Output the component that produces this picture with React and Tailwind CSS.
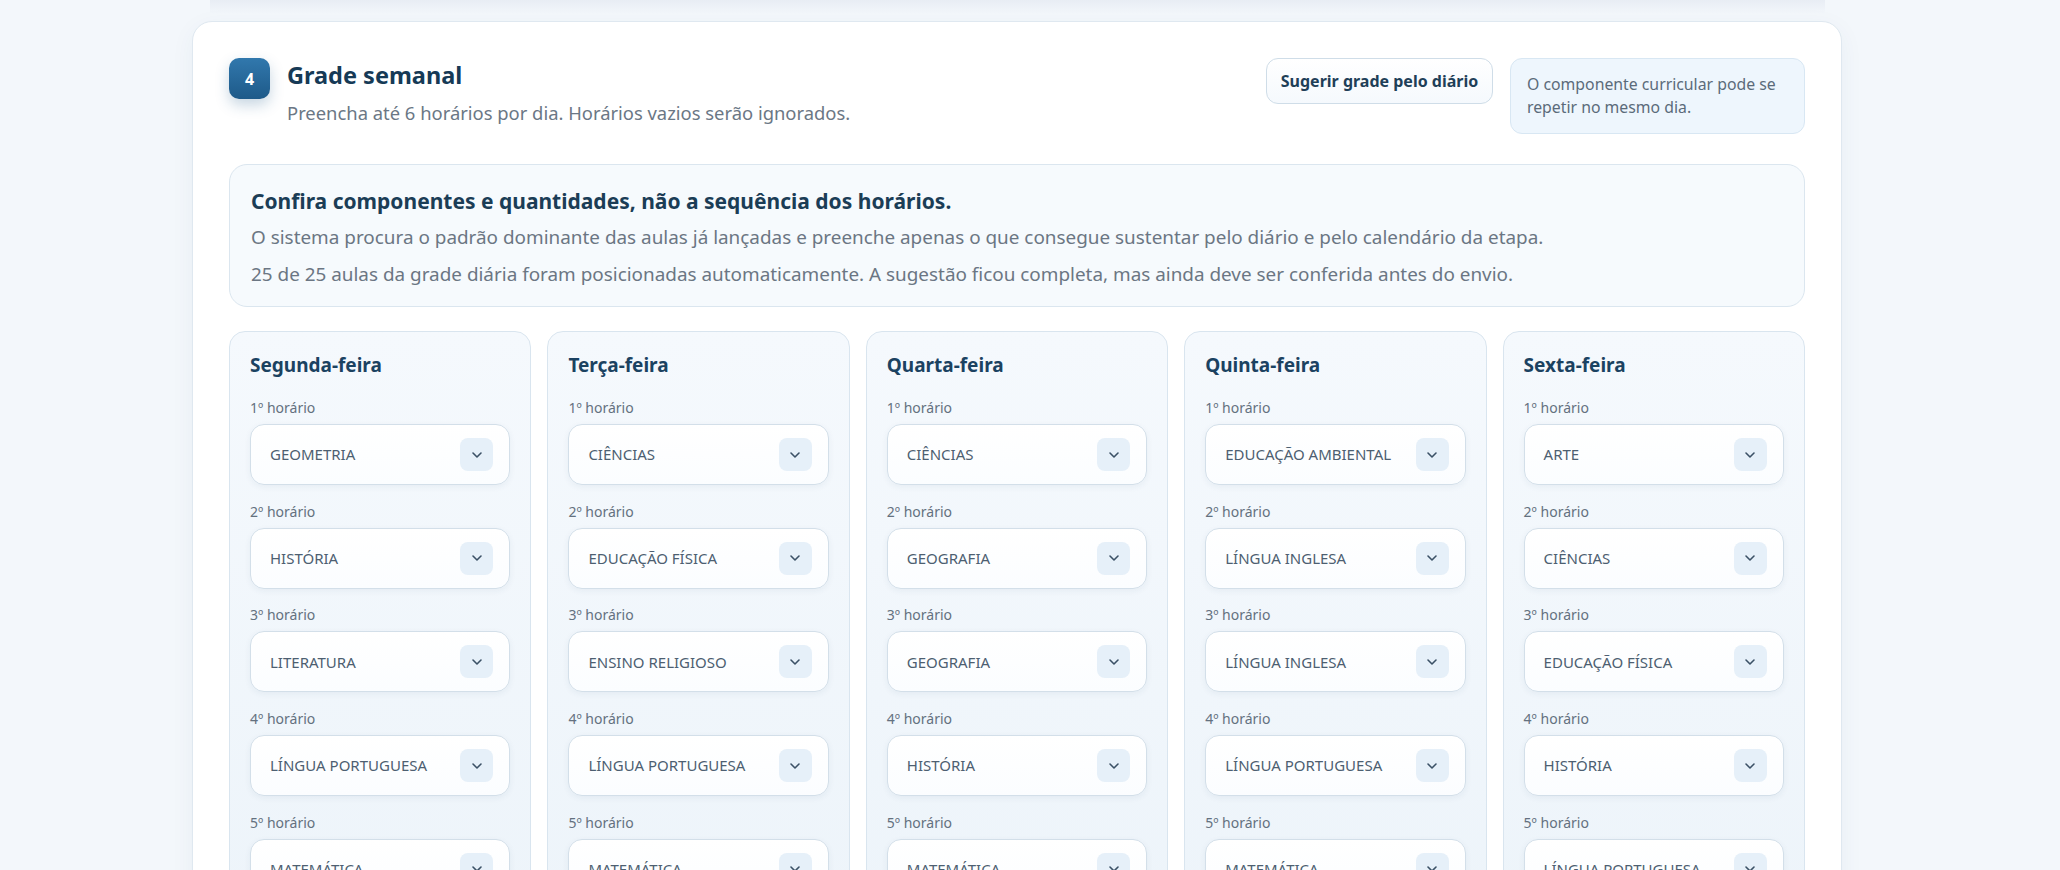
import { ChevronDown } from "lucide-react";

const days = [
  {
    name: "Segunda-feira",
    slots: ["GEOMETRIA", "HISTÓRIA", "LITERATURA", "LÍNGUA PORTUGUESA", "MATEMÁTICA"],
  },
  {
    name: "Terça-feira",
    slots: ["CIÊNCIAS", "EDUCAÇÃO FÍSICA", "ENSINO RELIGIOSO", "LÍNGUA PORTUGUESA", "MATEMÁTICA"],
  },
  {
    name: "Quarta-feira",
    slots: ["CIÊNCIAS", "GEOGRAFIA", "GEOGRAFIA", "HISTÓRIA", "MATEMÁTICA"],
  },
  {
    name: "Quinta-feira",
    slots: ["EDUCAÇÃO AMBIENTAL", "LÍNGUA INGLESA", "LÍNGUA INGLESA", "LÍNGUA PORTUGUESA", "MATEMÁTICA"],
  },
  {
    name: "Sexta-feira",
    slots: ["ARTE", "CIÊNCIAS", "EDUCAÇÃO FÍSICA", "HISTÓRIA", "LÍNGUA PORTUGUESA"],
  },
];

const SlotSelect = ({ index, value }) => (
  <div className="mb-[16.7px]">
    <label className="block h-5 text-[14px] leading-5 text-[#64717f]">{index}º horário</label>
    <div className="mt-[6px] flex h-[61px] items-center justify-between rounded-[14px] border border-[#d3dfe9] bg-gradient-to-b from-white to-[#fbfdff] pl-[19px] pr-[16px] shadow-[0_2px_6px_rgba(30,70,110,0.06)]">
      <span className="text-[15px] text-[#4d5f71]">{value}</span>
      <span className="flex h-[33px] w-[33px] items-center justify-center rounded-lg bg-[#e6f0f9]">
        <ChevronDown size={16} strokeWidth={2.4} className="text-[#3b5166]" />
      </span>
    </div>
  </div>
);

const DayColumn = ({ day }) => (
  <div className="rounded-[16px] border border-[#d9e5ef] bg-gradient-to-b from-[#f5f9fd] to-[#edf4fa] px-5 pt-[20px]">
    <h3 className="mb-[20px] text-[19px] font-bold leading-[26px] text-[#1b4261]">{day.name}</h3>
    {day.slots.map((s, i) => (
      <SlotSelect key={i} index={i + 1} value={s} />
    ))}
  </div>
);

export default function App() {
  return (
    <div
      className="h-[870px] overflow-hidden bg-[#f3f7fb]"
      style={{ fontFamily: '"Noto Sans", "Open Sans", sans-serif' }}
    >
      {/* end of the previous card */}
      <div className="ml-[210px] h-[14px] w-[1615px] bg-gradient-to-b from-[#e8edf4] to-[#f3f7fb]" />

      <div className="ml-[192px] mt-[7px] w-[1650px] rounded-[20px] border border-[#dfe8f0] bg-white px-9 pt-[36px] shadow-[0_6px_24px_rgba(40,80,120,0.05)]">
        {/* HEADER */}
        <div className="flex items-start justify-between">
          <div className="flex items-start gap-[17px]">
            <div className="flex h-[41px] w-[41px] items-center justify-center rounded-[10px] bg-gradient-to-b from-[#3178ad] to-[#1e5a89] text-[16px] font-bold text-white shadow-[0_6px_14px_rgba(30,90,140,0.25)]">
              4
            </div>
            <div className="pt-[2px]">
              <h2 className="text-[23.5px] font-bold leading-[30px] text-[#163a56]">Grade semanal</h2>
              <p className="mt-[11px] text-[18.4px] leading-6 text-[#6b7785]">
                Preencha até 6 horários por dia. Horários vazios serão ignorados.
              </p>
            </div>
          </div>

          <div className="flex items-start gap-[17px]">
            <button className="h-[46px] w-[227px] rounded-xl border border-[#cfdde8] bg-gradient-to-b from-white to-[#f5f9fd] text-[16px] font-bold text-[#1f3f58]">
              Sugerir grade pelo diário
            </button>
            <div className="w-[295px] rounded-xl border border-[#d8e7f3] bg-[#eef6fd] px-4 py-[14px] text-[15.8px] leading-[23px] text-[#5b6b7a]">
              O componente curricular pode se repetir no mesmo dia.
            </div>
          </div>
        </div>

        {/* NOTICE */}
        <div className="mt-[30px] rounded-[18px] border border-[#dbe6ef] bg-[#f6fafd] px-[21px] pb-[18px] pt-[22px]">
          <h4 className="text-[21px] font-bold leading-[28px] text-[#1b3d56]">
            Confira componentes e quantidades, não a sequência dos horários.
          </h4>
          <p className="mt-[9px] text-[18.9px] leading-[27px] text-[#6b7683]">
            O sistema procura o padrão dominante das aulas já lançadas e preenche apenas o que consegue sustentar pelo diário e pelo calendário da etapa.
          </p>
          <p className="mt-[10px] text-[18.9px] leading-[27px] text-[#6b7683]">
            25 de 25 aulas da grade diária foram posicionadas automaticamente. A sugestão ficou completa, mas ainda deve ser conferida antes do envio.
          </p>
        </div>

        {/* DAYS */}
        <div className="mt-[24px] grid grid-cols-5 gap-4">
          {days.map((d) => (
            <DayColumn key={d.name} day={d} />
          ))}
        </div>
      </div>
    </div>
  );
}
